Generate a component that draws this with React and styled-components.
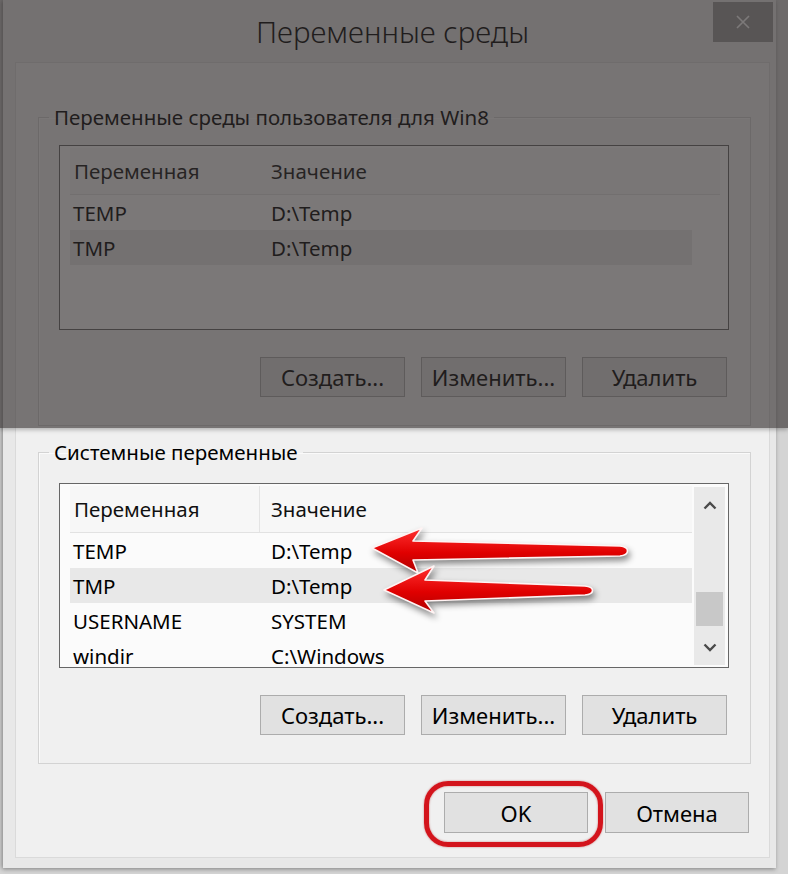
import React from 'react';
import styled, { createGlobalStyle } from 'styled-components';

const GlobalStyle = createGlobalStyle`
  html, body {
    margin: 0;
    padding: 0;
  }
  body {
    background: #d4d4d4;
    font-family: 'Noto Sans', 'Open Sans', 'Liberation Sans', sans-serif;
    color: #000;
  }
  * {
    box-sizing: border-box;
  }
`;

const userVars = [
  { name: 'TEMP', value: 'D:\\Temp' },
  { name: 'TMP', value: 'D:\\Temp', selected: true },
];

const systemVars = [
  { name: 'TEMP', value: 'D:\\Temp' },
  { name: 'TMP', value: 'D:\\Temp', selected: true },
  { name: 'USERNAME', value: 'SYSTEM' },
  { name: 'windir', value: 'C:\\Windows' },
];

const ChevronUp = () => (
  <svg width="14" height="9" viewBox="0 0 14 9">
    <polyline points="1.5,7.5 7,2 12.5,7.5" fill="none" stroke="#4a4a4a" strokeWidth="2.4" />
  </svg>
);

const ChevronDown = () => (
  <svg width="14" height="9" viewBox="0 0 14 9">
    <polyline points="1.5,1.5 7,7 12.5,1.5" fill="none" stroke="#4a4a4a" strokeWidth="2.4" />
  </svg>
);

const VarList = ({ rows, scroll }) => (
  <List>
    <Table>
      <HeaderRow $full={!scroll}>
        <HeaderCell>Переменная</HeaderCell>
        <HeaderCell $second $divider={scroll}>Значение</HeaderCell>
      </HeaderRow>
      {rows.map((r) => (
        <Row key={r.name} $selected={r.selected}>
          <Cell>{r.name}</Cell>
          <Cell $second>{r.value}</Cell>
        </Row>
      ))}
    </Table>
    {scroll && (
      <Scrollbar>
        <ScrollArrow>
          <ChevronUp />
        </ScrollArrow>
        <Track>
          <Thumb />
        </Track>
        <ScrollArrow>
          <ChevronDown />
        </ScrollArrow>
      </Scrollbar>
    )}
  </List>
);

const Actions = () => (
  <ButtonRow>
    <Button>Создать...</Button>
    <Button>Изменить...</Button>
    <Button>Удалить</Button>
  </ButtonRow>
);

const App = () => {
  return (
    <Page>
      <GlobalStyle />
      <Window>
        <TitleBar>
          <Title>Переменные среды</Title>
          <CloseButton aria-label="Закрыть">
            <svg width="16" height="16" viewBox="0 0 16 16">
              <path d="M2 2 L14 14 M14 2 L2 14" stroke="#ffffff" strokeWidth="1.6" />
            </svg>
          </CloseButton>
        </TitleBar>
        <Panel>
          <Group>
            <Legend>Переменные среды пользователя для Win8</Legend>
            <VarList rows={userVars} />
            <Actions />
          </Group>
          <Group $second>
            <Legend>Системные переменные</Legend>
            <VarList rows={systemVars} scroll />
            <Actions />
          </Group>
          <DialogButtons>
            <Marked>
              <Button $dialog>OK</Button>
              <Ring />
            </Marked>
            <Button $dialog>Отмена</Button>
          </DialogButtons>
        </Panel>
      </Window>
      <Dim />
      <Arrows viewBox="360 520 280 100" width="280" height="100">
        <defs>
          <linearGradient id="red" x1="0" y1="0" x2="0" y2="1">
            <stop offset="0" stopColor="#ff3030" />
            <stop offset="0.55" stopColor="#e00000" />
            <stop offset="1" stopColor="#b00000" />
          </linearGradient>
        </defs>
        <path
          d="M372 548 L422 528 L413 541 L620 546 C630 547 630 555 620 556 L413 560 L418 573 Z"
          fill="url(#red)"
          stroke="#fff3f3"
          strokeWidth="1.6"
          strokeLinejoin="round"
        />
        <path
          d="M384 590 L434 566 L425 580 L585 586 C595 587 595 594 585 595 L425 601 L434 613 Z"
          fill="url(#red)"
          stroke="#fff3f3"
          strokeWidth="1.6"
          strokeLinejoin="round"
        />
      </Arrows>
    </Page>
  );
};

const Page = styled.div`
  position: relative;
  width: 788px;
  height: 874px;
  overflow: hidden;
`;

const Window = styled.div`
  width: 773px;
  margin-left: 3px;
  padding: 0 6px 10px 12px;
  background: #e8e8e8;
  box-shadow: -2px 0 4px rgba(0, 0, 0, 0.22), 0 2px 4px rgba(0, 0, 0, 0.2);
`;

const TitleBar = styled.div`
  display: grid;
  grid-template-columns: 64px 1fr 64px;
  height: 62px;
`;

const Title = styled.h1`
  grid-column: 2;
  margin: 0;
  text-align: center;
  font-size: 29.5px;
  font-weight: 300;
  line-height: 64px;
  color: #000;
`;

const CloseButton = styled.button`
  grid-column: 3;
  justify-self: end;
  align-self: start;
  width: 60px;
  height: 40px;
  margin: 2px -3px 0 0;
  padding: 0;
  border: none;
  background: #9c9c9c;
  display: flex;
  align-items: center;
  justify-content: center;
`;

const Panel = styled.div`
  display: flex;
  flex-direction: column;
  background: #f0f0f0;
  border: 1px solid #dadada;
  padding: 41px 18px 24px 22px;
`;

const Group = styled.fieldset`
  margin: ${(p) => (p.$second ? '13px 0 0' : '0')};
  min-width: 0;
  border: 1px solid #d3d3d3;
  box-shadow: inset 1px 1px 0 #fafafa;
  padding: ${(p) => (p.$second ? '18px' : '15px')} 21px 28px 20px;
`;

const Legend = styled.legend`
  margin-left: -10px;
  padding: 0 5px;
  font-size: 20.5px;
  line-height: 26px;
  color: #000;
`;

const List = styled.div`
  display: flex;
  height: 185px;
  border: 1px solid #666;
  background: #fbfbfb;
  padding: 2px 3px 0 10px;
  overflow: hidden;
`;

const Table = styled.div`
  flex: 1;
  display: flex;
  flex-direction: column;
  min-width: 0;
`;

const HeaderRow = styled.div`
  display: grid;
  grid-template-columns: 189px 1fr;
  flex: none;
  height: 47px;
  width: ${(p) => (p.$full ? '650px' : '100%')};
  background: #f7f7f7;
  border-bottom: 1px solid #e2e2e2;
`;

const HeaderCell = styled.div`
  display: flex;
  align-items: center;
  padding-left: ${(p) => (p.$second ? '11px' : '3px')};
  border-left: 1px solid ${(p) => (p.$divider ? '#e4e4e4' : 'transparent')};
  font-size: 20.5px;
  color: #111;
`;

const Row = styled.div`
  display: grid;
  grid-template-columns: 189px 1fr;
  flex: none;
  width: 622px;
  height: 35px;
  background: ${(p) => (p.$selected ? '#e8e8e8' : 'transparent')};
`;

const Cell = styled.div`
  display: flex;
  align-items: center;
  padding-left: ${(p) => (p.$second ? '12px' : '3px')};
  font-size: 20.5px;
  color: #000;
  white-space: nowrap;
`;

const Scrollbar = styled.div`
  display: flex;
  flex-direction: column;
  width: 31px;
  margin: 1px 0 2px 2px;
  background: #e9e9e9;
`;

const ScrollArrow = styled.div`
  display: flex;
  align-items: center;
  justify-content: center;
  height: 36px;
  flex: none;
`;

const Track = styled.div`
  flex: 1;
  padding-top: 69px;
`;

const Thumb = styled.div`
  height: 34px;
  margin: 0 2px;
  background: #c8c8c8;
`;

const ButtonRow = styled.div`
  display: flex;
  justify-content: flex-end;
  gap: 16px;
  margin-top: 27px;
  padding-right: 2px;
`;

const Button = styled.button`
  width: ${(p) => (p.$dialog ? '144px' : '145px')};
  height: ${(p) => (p.$dialog ? '41px' : '40px')};
  padding: 0;
  background: #e1e1e1;
  border: 1px solid #acacac;
  font-family: inherit;
  font-size: 22px;
  color: #000;
`;

const DialogButtons = styled.div`
  display: flex;
  justify-content: flex-end;
  gap: 17px;
  margin-top: 28px;
  padding-right: 2px;
`;

const Marked = styled.div`
  position: relative;
  display: flex;
`;

const Ring = styled.div`
  position: absolute;
  top: -11px;
  left: -20px;
  right: -15px;
  bottom: -14px;
  border: 5px solid #d3141c;
  border-radius: 24px;
  box-shadow: 0 0 2px rgba(160, 0, 0, 0.5), inset 0 0 2px rgba(160, 0, 0, 0.5);
`;

const Dim = styled.div`
  position: absolute;
  top: 0;
  left: 0;
  right: 0;
  height: 428px;
  background: rgba(50, 45, 45, 0.64);
  box-shadow: 0 2px 4px rgba(0, 0, 0, 0.25);
`;

const Arrows = styled.svg`
  position: absolute;
  left: 360px;
  top: 520px;
  overflow: visible;
  filter: drop-shadow(2px 4px 3px rgba(0, 0, 0, 0.45));
`;

export default App;
